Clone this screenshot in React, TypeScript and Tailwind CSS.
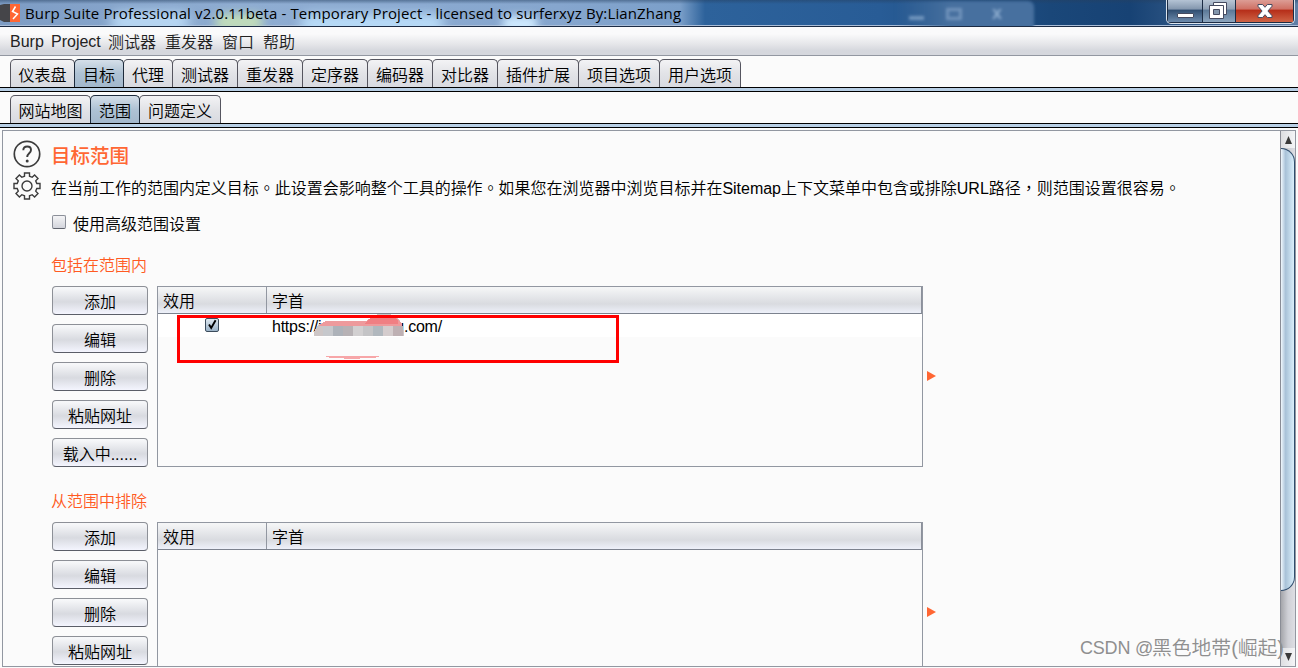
import React from 'react';
import clsx from 'clsx';

const CJK = "font-['Liberation_Sans','Noto_Sans_CJK_SC',sans-serif]";

const mainTabs = [
  { label: '仪表盘', width: 'w-[65px]' },
  { label: '目标', width: 'w-[50px]', active: true },
  { label: '代理', width: 'w-[50px]' },
  { label: '测试器', width: 'w-[66px]' },
  { label: '重发器', width: 'w-[66px]' },
  { label: '定序器', width: 'w-[66px]' },
  { label: '编码器', width: 'w-[66px]' },
  { label: '对比器', width: 'w-[66px]' },
  { label: '插件扩展', width: 'w-[82px]' },
  { label: '项目选项', width: 'w-[82px]' },
  { label: '用户选项', width: 'w-[82px]' }
];

const targetTabs = [
  { label: '网站地图', width: 'w-[81px]' },
  { label: '范围', width: 'w-[50px]', active: true },
  { label: '问题定义', width: 'w-[82px]' }
];

type Tab = { label: string; width: string; active?: boolean };

const TabStrip: React.FC<{ tabs: Tab[] }> = ({ tabs }) => (
  <div className="shrink-0">
    <div className="flex h-7 pl-[11px]">
      {tabs.map((tab) => (
        <div
          key={tab.label}
          className={clsx(
            '-ml-px flex h-7 items-center justify-center rounded-t-[5px] border border-b-0 pt-[5px] text-base leading-none whitespace-nowrap',
            tab.width,
            tab.active
              ? 'z-10 border-[#1d2b3c] bg-linear-to-b from-[#d5dfe9] via-[#aec2d4] to-[#a3b8cc]'
              : 'border-[#55555f] bg-linear-to-b from-[#f3f3f5] via-[#e2e3e7] to-[#d8dae0]'
          )}
        >
          {tab.label}
        </div>
      ))}
    </div>
    <div className="h-[5px] border-y border-black bg-[#b8cfe5]" />
  </div>
);

const PushButton: React.FC<{ children: React.ReactNode }> = ({ children }) => (
  <button className="flex h-[29px] w-24 shrink-0 items-center justify-center rounded-[4px] border border-[#8d9097] border-b-[#5b5e68] bg-linear-to-b from-[#f6f7f9] from-5% via-[#d8dae0] via-55% to-[#f4f5fe] pt-[4px] text-base leading-none">
    {children}
  </button>
);

const CheckBox: React.FC<{ checked?: boolean }> = ({ checked }) => (
  <span
    className={clsx(
      'block h-[14px] w-[14px] shrink-0 rounded-[2px] border',
      checked
        ? 'border-[#3c4c5c] bg-linear-to-b from-[#dfe8f0] to-[#9bb3c8]'
        : 'border-[#8b8f99] border-b-[#5f636d] bg-linear-to-b from-[#f4f4f6] to-[#d3d5dc]'
    )}
  >
    {checked && (
      <svg viewBox="0 0 12 12" className="h-3 w-3 overflow-visible">
        <path d="M3 5.5 5.2 9 9.6 1.2" fill="none" stroke="#000" strokeWidth="1.9" />
      </svg>
    )}
  </span>
);

// Pixelated censor over the host name
const Mosaic = () => (
  <svg viewBox="0 0 90 46" className="absolute top-[27px] left-[156px] h-[46px] w-[90px]" shapeRendering="crispEdges">
    <path d="M0 22v-4l4-7 6-3h42l6-6 6-2h12l8 4 4 6 2 8v4z" fill="#cdc6c6" />
    <path d="M5 11l7-4h40l6-4h24l6 7v2H5z" fill="#ee9a9c" />
    <path d="M54 6l5-3h21l4 3v4H50z" fill="#f07f83" />
    <path d="M9 12h10v10H9z" fill="#c6c8cc" />
    <path d="M19 12h10v10H19z" fill="#adb2b9" />
    <path d="M29 12h10v10H29z" fill="#b7b2b5" />
    <path d="M39 12h10v10H39z" fill="#d2d0d1" />
    <path d="M49 12h10v10H49z" fill="#c4c4c6" />
    <path d="M59 12h10v10H59z" fill="#b1b8be" />
    <path d="M69 12h10v10H69z" fill="#d4cccd" />
    <path d="M79 12h10v10H79z" fill="#beb0b3" />
    <path d="M10 42h56l-6 2H46v1H30v-1H16z" fill="#f7a6a8" />
  </svg>
);

const ScopeSection: React.FC<{ title: string; buttons: string[]; children?: React.ReactNode }> = ({
  title,
  buttons,
  children
}) => (
  <section className="h-[236px] shrink-0">
    <h2 className="h-[30px] text-base leading-[20px] font-[350] text-[#ff5a22]">{title}</h2>
    <div className="flex">
      <div className="flex w-[106px] flex-col gap-[9px] pl-px">
        {buttons.map((label) => (
          <PushButton key={label}>{label}</PushButton>
        ))}
      </div>
      <div className="relative h-[181px] w-[766px] border border-[#9297a1]">
        <div className="flex h-[27px] border-r border-b border-r-[#8b909b] border-b-[#7c828e] bg-linear-to-b from-[#f4f5f6] from-5% via-[#d9dbe0] via-65% to-[#eef1fa] text-base leading-[30px]">
          <div className="w-[109px] border-r border-[#9297a1] pl-[5px]">效用</div>
          <div className="pl-[5px]">字首</div>
        </div>
        {children}
      </div>
      <svg viewBox="0 0 9 10" className="mt-[85px] ml-1 h-[10px] w-[9px]">
        <path d="M0 0 9 5 0 10z" fill="#ff6633" />
      </svg>
    </div>
  </section>
);

const TitleBar = () => (
  <header className="relative flex h-[27px] shrink-0 overflow-hidden border-b border-[#1b2b44] bg-[linear-gradient(90deg,#7d9cc4_0,#8fadd2_240px,#86a6ce_560px,#7b9fc9_680px,#2d629b_705px,#285c96_880px,#1a4779_1050px,#174274_1130px,#5f7fa6_1298px)]">
    <div className="absolute inset-x-0 bottom-0 h-px bg-[#a9bdd8]" />
    <div className="absolute top-[12px] left-[110px] h-5 w-20 rounded-full bg-[#b9d8f4] blur-[6px]" />
    <div className="absolute top-[14px] left-[215px] h-4 w-12 rounded-full bg-[#c3deb9] blur-[5px]" />
    <div className="absolute top-[14px] left-[300px] h-5 w-36 rounded-full bg-[#b9dcf8] blur-[6px]" />
    <div className="absolute top-[16px] left-[502px] h-4 w-9 rounded-full bg-[#cfeaff] blur-[4px]" />
    <div className="absolute inset-x-0 top-0 h-1 bg-linear-to-b from-[#25406180] to-transparent" />
    <div className="absolute top-px left-[895px] flex h-[30px] w-[139px] items-start gap-[22px] rounded-tr-md bg-linear-to-r from-[#47709f]/0 to-[#47709f] to-40% pt-[7px] pl-[14px] blur-[1.5px]">
      <span className="mt-2 h-1 w-[15px] bg-[#8dacce]/70" />
      <span className="h-3 w-4 border-[3px] border-[#83a3c8]/70" />
      <span className="ml-2 text-[18px] leading-[10px] font-bold text-[#8dacce]">x</span>
    </div>

    <svg viewBox="0 0 21 20" className="relative mt-[3px] h-5 w-[21px]">
      <path d="M0 2 4 1h6v18H4l-4-2z" fill="#454549" />
      <path d="M10 1h10v18H10z" fill="#ff6633" />
      <path d="M15.5 3.5 12.5 8.5l5 2.5-4.5 5" fill="none" stroke="#fff" strokeWidth="1.5" />
    </svg>
    <span className="relative ml-1 font-['Open_Sans',sans-serif] text-[15px] leading-[27px] font-normal tracking-[0.13px] whitespace-nowrap text-black">
      Burp Suite Professional v2.0.11beta - Temporary Project - licensed to surferxyz By:LianZhang
    </span>

    <div className="absolute top-0 right-[3px] flex h-6 w-[129px] overflow-hidden rounded-b-[5px] border border-t-0 border-[#dbe4ee] bg-[#1c2c44] px-px pb-px">
      <div className="flex w-[34px] items-end justify-center bg-[linear-gradient(#b4c3d4,#8396ad_42%,#2f4d70_45%,#6d8bad)] pb-[4px]">
        <span className="h-[5px] w-[17px] rounded-[1px] border border-[#454b60] bg-white" />
      </div>
      <div className="ml-px flex w-8 justify-center bg-[linear-gradient(#b9c6d5,#8fa0b5_42%,#5a7796_45%,#8ca5be)]">
        <svg viewBox="0 0 18 18" className="mt-[2px] mr-[2px] h-[18px] w-[18px] shrink-0">
          <path d="M4.5.5h13v12h-13z" fill="#fff" stroke="#454b60" />
          <path d="M.5 3.5h14v13H.5z" fill="#fff" stroke="#454b60" />
          <path d="M4.5 7.5h6v5h-6z" fill="#8296ac" stroke="#454b60" />
        </svg>
      </div>
      <div className="ml-px flex grow justify-center bg-[linear-gradient(#dc9d95,#cf6f63_42%,#b52d18_45%,#cf6345)]">
        <svg viewBox="0 0 16 14" className="mt-1 h-[14px] w-4 shrink-0">
          <path d="M1 .5h4.6L8 3.3 10.4.5H15v1.8L10.9 7l4.1 4.7v1.8h-4.6L8 10.7l-2.4 2.8H1v-1.8L5.1 7 1 2.3z" fill="#fff" stroke="#454b60" />
        </svg>
      </div>
    </div>
  </header>
);

const ScrollBar = () => (
  <div className="flex w-[15px] shrink-0 flex-col border-l border-[#8a8d96] bg-linear-to-r from-[#a5a6ab] via-[#cfd0d6] to-[#dddee3]">
    <div className="flex h-[17px] shrink-0 items-center justify-center bg-linear-to-r from-[#dedfe2] to-[#f4f5f7]">
      <svg viewBox="0 0 7 8" className="h-2 w-[7px]">
        <path d="M3.5 0 7 8H0z" fill="#3a3a3a" />
      </svg>
    </div>
    <div className="h-[443px] shrink-0 rounded-r-[14px] border border-l-0 border-[#2f4d6d] bg-linear-to-r from-[#f0f7fc] via-[#a9c2d8] via-35% to-[#d9effb]" />
    <div className="grow" />
    <div className="flex h-[18px] shrink-0 items-center justify-center bg-linear-to-r from-[#dedfe2] to-[#f4f5f7]">
      <svg viewBox="0 0 7 8" className="h-2 w-[7px]">
        <path d="M0 0h7L3.5 8z" fill="#3a3a3a" />
      </svg>
    </div>
  </div>
);

export default function App() {
  return (
    <div className={clsx('relative flex h-[668px] w-[1298px] flex-col overflow-hidden bg-[#fbfbfb] font-[350] text-black', CJK)}>
      <TitleBar />

      <nav className="flex h-[29px] shrink-0 border-b border-[#9297a1] bg-linear-to-b from-[#fafafb] from-25% via-[#e6e7ea] via-60% to-[#d5d7dd] to-85% pl-[10px] text-base leading-[32px] text-[#222]">
        <span className="w-[41px] leading-[30px] font-normal">Burp</span>
        <span className="w-[57px] leading-[30px] font-normal">Project</span>
        <span className="w-[57px]">测试器</span>
        <span className="w-[57px]">重发器</span>
        <span className="w-[41px]">窗口</span>
        <span>帮助</span>
      </nav>

      <div className="h-[3px] shrink-0" />
      <TabStrip tabs={mainTabs} />
      <div className="h-[3px] shrink-0" />
      <TabStrip tabs={targetTabs} />

      <main className="mt-[2px] mr-[2px] ml-[2px] flex h-[537px] shrink-0 overflow-hidden border border-[#9297a1]">
        <div className="flex w-12 shrink-0 flex-col items-center gap-1 pt-[9px] pr-px">
          <svg viewBox="0 0 28 28" className="h-7 w-7" fill="none" stroke="#3c3c3c">
            <circle cx="14" cy="14" r="12.7" strokeWidth="1.7" />
            <path d="M10.3 10.3c0-2.3 1.6-3.8 3.9-3.8s3.8 1.4 3.8 3.4c0 3.4-3.8 3.3-3.8 7.2" strokeWidth="1.9" />
            <circle cx="14.2" cy="21" r="1.5" fill="#3c3c3c" stroke="none" />
          </svg>
          <svg viewBox="0 0 28 28" className="h-7 w-7" fill="none" stroke="#3c3c3c" strokeWidth="1.4">
            <path d="M11.5 1h5v3.2l2.7 1.1 2.4-2.3 3.4 3.4-2.3 2.4 1.1 2.7H27v5h-3.2l-1.1 2.7 2.3 2.4-3.4 3.4-2.4-2.3-2.7 1.1V27h-5v-3.2l-2.7-1.1L6.4 25 3 21.6l2.3-2.4-1.1-2.7H1v-5h3.2l1.1-2.7L3 6.4 6.4 3l2.4 2.3 2.7-1.1z" />
            <circle cx="14" cy="14" r="5" />
          </svg>
        </div>

        <div className="w-[1229px] shrink-0">
          <h1 className="h-[38px] pt-[9px] text-[19.5px] leading-[32px] font-medium text-[#ff6633]">目标范围</h1>
          <p className="h-[44px] font-['Liberation_Sans','Noto_Sans_CJK_TC',sans-serif] text-base leading-[39px] tracking-[-0.015px] whitespace-nowrap">
            在当前工作的范围内定义目标。此设置会影响整个工具的操作。如果您在浏览器中浏览目标并在
            <span className="font-normal">Sitemap</span>上下文菜单中包含或排除
            <span className="font-normal">URL</span>路径，则范围设置很容易。
          </p>
          <div className="flex h-[43px] gap-[7px] pt-[2px] pl-px text-base leading-[20px]">
            <CheckBox />
            <span>使用高级范围设置</span>
          </div>

          <ScopeSection title="包括在范围内" buttons={['添加', '编辑', '删除', '粘贴网址', '载入中......']}>
            <div className="flex h-[23px] bg-white font-normal">
              <div className="flex w-[109px] justify-center pt-1 pr-[2px]">
                <CheckBox checked />
              </div>
              <span className="pl-[5px] text-base leading-[26px] tracking-[-0.25px]">https://i</span>
              <span className="ml-[74px] text-base leading-[26px] tracking-[-0.25px]">u.com/</span>
            </div>
            <Mosaic />
            <div className="absolute top-[28px] left-[19px] h-12 w-[442px] border-3 border-[#ff0000]" />
          </ScopeSection>
          <ScopeSection title="从范围中排除" buttons={['添加', '编辑', '删除', '粘贴网址']} />
        </div>

        <ScrollBar />
      </main>

      <div className="absolute top-[636px] left-[1080px] flex text-[#8f8f8f] whitespace-nowrap">
        <span className="w-[72px] text-[18px] leading-[25px] font-normal tracking-[-0.2px]">CSDN @</span>
        <span className="text-[19.8px] leading-[25px] font-[350]">黑色地带(崛起)</span>
      </div>
    </div>
  );
}
